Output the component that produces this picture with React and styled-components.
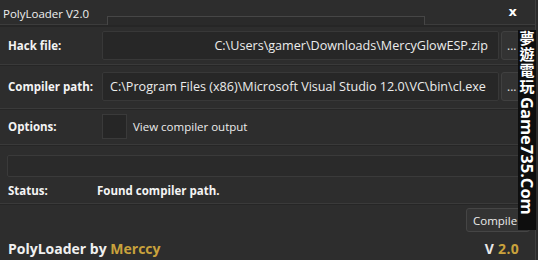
import React from 'react';
import styled, { createGlobalStyle } from 'styled-components';

const Global = createGlobalStyle`
  html, body {
    margin: 0;
    padding: 0;
    background: #2b2b2b;
  }
  body {
    font-family: 'Open Sans', 'Noto Sans', sans-serif;
  }
`;

const Screen = styled.div`
  position: relative;
  width: 538px;
  height: 260px;
  overflow: hidden;
  background: #2b2b2b;
`;

const Window = styled.div`
  display: flex;
  flex-direction: column;
  width: 535px;
  height: 260px;
  background: #2d2d2d;
  border-right: 1px solid #3e3e3e;
  color: #f0f0f0;
`;

const TitleBar = styled.div`
  display: flex;
  align-items: flex-start;
  height: 24px;
  padding: 0 0 0 3px;
  border-bottom: 1px solid #3c3c3c;
  box-shadow: 0 2px 0 #262626;
`;

const Title = styled.span`
  font-size: 11.5px;
  line-height: 28px;
  width: 104px;
`;

const TitleSlot = styled.div`
  margin-top: 16px;
  width: 316px;
  height: 8px;
  border: 1px solid #464646;
  border-bottom: none;
  background: #2a2a2a;
`;

const Close = styled.span`
  margin-left: auto;
  margin-right: 18px;
  margin-top: 4px;
  font-family: 'DejaVu Sans', sans-serif;
  font-weight: bold;
  font-size: 13px;
  color: #ffffff;
`;

const Row = styled.div`
  display: grid;
  grid-template-columns: 92px 397px 30px;
  column-gap: 2px;
  align-items: center;
  height: ${p => p.h}px;
  padding-left: 8px;
  border-bottom: 1px solid #3a3a3a;
  box-shadow: 0 1px 0 #262626;
  margin-top: ${p => p.mt || 0}px;
`;

const Label = styled.span`
  font-weight: bold;
  font-size: 11.5px;
  color: #f4f4f4;
`;

const Field = styled.div`
  box-sizing: border-box;
  height: 29px;
  background: #272727;
  border: 1px solid #383838;
  border-radius: 2px;
  display: flex;
  align-items: center;
  justify-content: ${p => (p.right ? 'flex-end' : 'flex-start')};
  padding: 0 10px 0 7px;
  font-size: 12.6px;
  color: #ececec;
  white-space: nowrap;
  overflow: hidden;
`;

const Browse = styled.div`
  box-sizing: border-box;
  height: 29px;
  background: #333333;
  border: 1px solid #404040;
  border-radius: 3px;
  display: flex;
  align-items: center;
  padding-left: 5px;
  font-size: 12px;
  color: #e0e0e0;
`;

const CheckLine = styled.div`
  display: flex;
  align-items: center;
  gap: 6px;
  font-size: 11.5px;
  color: #ececec;
`;

const Box = styled.div`
  width: 25px;
  height: 25px;
  background: #262626;
  border: 1px solid #3a3a3a;
  box-sizing: border-box;
`;

const Progress = styled.div`
  margin: 10px 6px 0 7px;
  height: 20px;
  background: #2a2a2a;
  border: 1px solid #3a3a3a;
  border-radius: 2px;
`;

const StatusRow = styled.div`
  display: flex;
  align-items: center;
  height: 26px;
  padding-left: 8px;
  border-bottom: 1px solid #3a3a3a;
  box-shadow: 0 1px 0 #262626;
`;

const StatusText = styled.span`
  font-weight: bold;
  font-size: 11.5px;
  color: #f4f4f4;
  width: 89px;
`;

const Actions = styled.div`
  display: flex;
  justify-content: flex-end;
  padding: 4px 5px 0 0;
`;

const Button = styled.div`
  width: 56px;
  height: 22px;
  background: #333333;
  border: 1px solid #454545;
  border-radius: 3px;
  display: flex;
  align-items: center;
  padding-left: 6px;
  font-size: 11.5px;
  color: #ececec;
`;

const Footer = styled.div`
  display: flex;
  align-items: center;
  justify-content: space-between;
  padding: 7px 16px 0 8px;
  font-weight: bold;
  font-size: 14px;
`;

const Gold = styled.span`
  color: #c9a23c;
`;

const Version = styled.span`
  color: #e8e8e8;
  letter-spacing: 0.3px;
`;

const Watermark = styled.div`
  position: absolute;
  left: 518px;
  top: 30px;
  width: 18px;
  height: 200px;
  background: #0e0e0e;
  display: flex;
  flex-direction: column;
  align-items: center;
  color: #ffffff;
  font-weight: bold;
`;

const Cjk = styled.span`
  font-family: 'Noto Sans CJK TC', 'Noto Sans CJK SC', sans-serif;
  font-size: 15px;
  line-height: 16px;
`;

const Latin = styled.span`
  writing-mode: vertical-rl;
  font-family: 'Open Sans', sans-serif;
  font-size: 16.5px;
  line-height: 18px;
  margin-top: 3px;
`;

export default function App() {
  return (
    <Screen>
      <Global />
      <Window>
        <TitleBar>
          <Title>PolyLoader V2.0</Title>
          <TitleSlot />
          <Close>x</Close>
        </TitleBar>
        <Row h={37} mt={2}>
          <Label>Hack file:</Label>
          <Field right>C:\Users\gamer\Downloads\MercyGlowESP.zip</Field>
          <Browse>...</Browse>
        </Row>
        <Row h={43}>
          <Label>Compiler path:</Label>
          <Field>C:\Program Files (x86)\Microsoft Visual Studio 12.0\VC\bin\cl.exe</Field>
          <Browse>...</Browse>
        </Row>
        <Row h={35}>
          <Label>Options:</Label>
          <CheckLine>
            <Box />
            View compiler output
          </CheckLine>
        </Row>
        <Progress />
        <StatusRow>
          <StatusText>Status:</StatusText>
          <Label>Found compiler path.</Label>
        </StatusRow>
        <Actions>
          <Button>Compile</Button>
        </Actions>
        <Footer>
          <span>
            PolyLoader by <Gold>Merccy</Gold>
          </span>
          <Version>
            V <Gold>2.0</Gold>
          </Version>
        </Footer>
      </Window>
      <Watermark>
        <Cjk>夢</Cjk>
        <Cjk>遊</Cjk>
        <Cjk>電</Cjk>
        <Cjk>玩</Cjk>
        <Latin>Game735.Com</Latin>
      </Watermark>
    </Screen>
  );
}
